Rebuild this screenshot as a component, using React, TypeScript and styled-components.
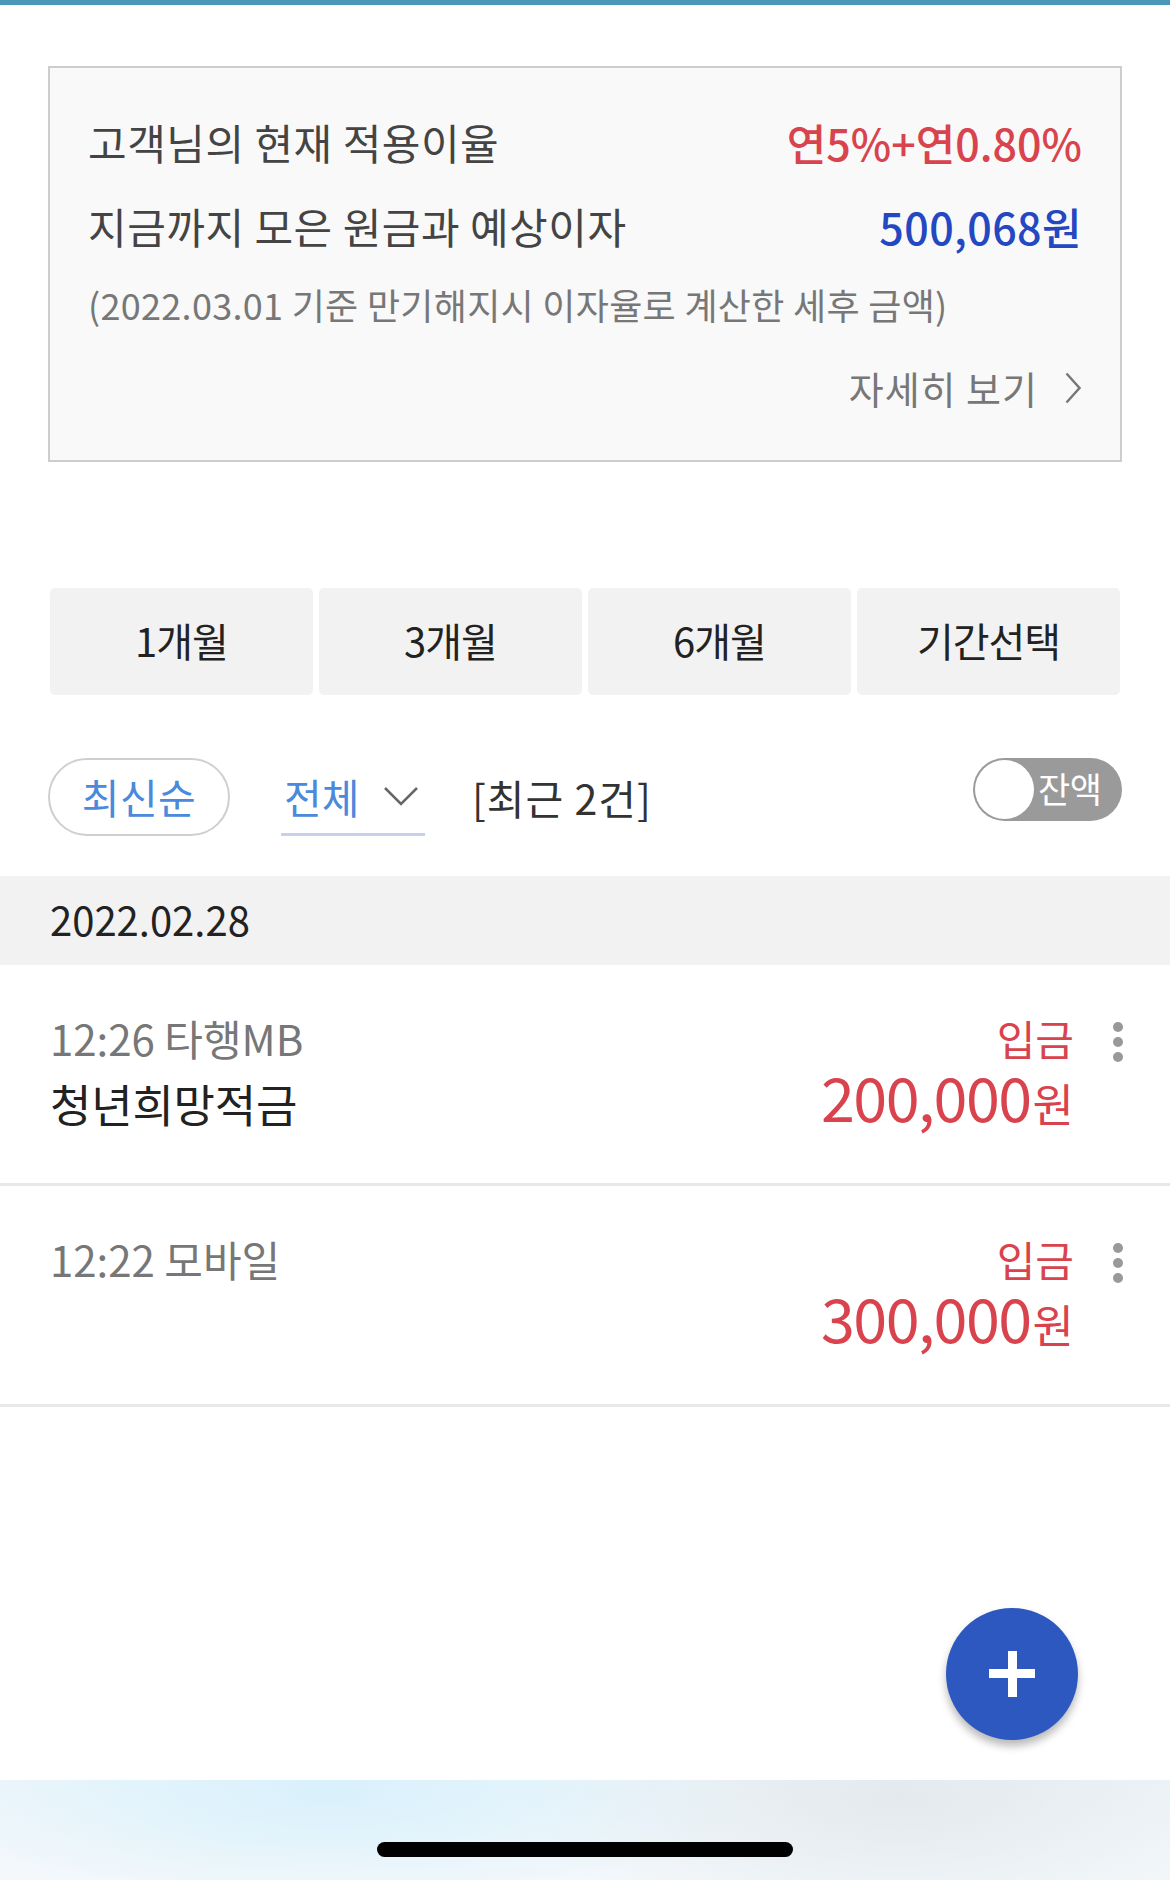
import React from "react";
import styled, { createGlobalStyle } from "styled-components";

const GlobalStyle = createGlobalStyle`
  html, body { margin: 0; padding: 0; background: #ffffff; }
  body { font-family: "Noto Sans CJK KR", "Noto Sans", sans-serif; color: #222; }
  * { box-sizing: border-box; }
`;

const Page = styled.div`
  position: relative;
  width: 1170px;
  min-height: 1880px;
  display: flex;
  flex-direction: column;
  background: #fff;
`;

const TopLine = styled.div`
  height: 5px;
  background: #4b97b8;
`;

const Card = styled.section`
  margin: 61px 48px 0;
  border: 2px solid #cdcdcd;
  background: #f9f9f9;
  padding: 46px 38px 47px;
  display: flex;
  flex-direction: column;
`;

const InfoRow = styled.div<{ $h: number; $mt?: number; $end?: boolean }>`
  height: ${(p) => p.$h}px;
  margin-top: ${(p) => p.$mt ?? 0}px;
  display: flex;
  align-items: center;
  justify-content: ${(p) => (p.$end ? "flex-end" : "space-between")};
  line-height: 1;
`;

const Label = styled.span`
  font-size: 42px;
  color: #444;
  letter-spacing: 0.5px;
`;

const Rate = styled.span`
  font-size: 43px;
  font-weight: 500;
  color: #d8434e;
  letter-spacing: 0px;
`;

const Total = styled.span`
  font-size: 43px;
  font-weight: 500;
  color: #2447c2;
  letter-spacing: 0.4px;
`;

const Note = styled.span`
  font-size: 36px;
  color: #777;
  letter-spacing: 0.3px;
`;

const DetailLink = styled.span`
  display: flex;
  align-items: center;
  gap: 26px;
  font-size: 38px;
  color: #777;
  letter-spacing: 1px;
`;

const Periods = styled.div`
  margin-top: 126px;
  padding: 0 50px;
  display: grid;
  grid-template-columns: repeat(4, 1fr);
  gap: 6px;
`;

const PeriodButton = styled.button`
  height: 107px;
  border: none;
  border-radius: 5px;
  background: #f2f2f2;
  font-family: inherit;
  font-size: 40px;
  color: #222;
  letter-spacing: -1px;
  display: flex;
  align-items: center;
  justify-content: center;
  padding: 0 0 4px;
`;

const FilterRow = styled.div`
  margin-top: 63px;
  padding: 0 48px;
  height: 78px;
  display: flex;
  align-items: center;
`;

const SortPill = styled.div`
  width: 182px;
  height: 78px;
  border: 2px solid #cfcfcf;
  border-radius: 39px;
  display: flex;
  align-items: center;
  justify-content: center;
  font-size: 41px;
  color: #4a89dc;
  letter-spacing: 0.5px;
  padding-bottom: 3px;
`;

const Dropdown = styled.div`
  margin-left: 51px;
  width: 144px;
  height: 78px;
  border-bottom: 3px solid #c5d0ea;
  display: flex;
  align-items: center;
  gap: 24px;
  padding-left: 3px;
  font-size: 41px;
  color: #4a89dc;
  letter-spacing: 0px;
`;

const RecentCount = styled.span`
  margin-left: 47px;
  font-size: 41px;
  color: #333;
  letter-spacing: 1px;
`;

const Toggle = styled.div`
  margin-left: auto;
  align-self: flex-start;
  width: 149px;
  height: 63px;
  border-radius: 32px;
  background: #9a9a9a;
  padding: 2px;
  display: flex;
  align-items: center;
`;

const Knob = styled.span`
  width: 59px;
  height: 59px;
  border-radius: 50%;
  background: #fff;
  flex: none;
`;

const ToggleText = styled.span`
  margin-left: 4px;
  font-size: 35px;
  color: #fff;
  letter-spacing: -0.5px;
  line-height: 1;
  padding-bottom: 4px;
`;

const DateHeader = styled.div`
  margin-top: 40px;
  height: 89px;
  background: #f2f2f2;
  padding-left: 50px;
  padding-bottom: 4px;
  display: flex;
  align-items: center;
  font-size: 40px;
  color: #222;
  letter-spacing: 0px;
`;

const Item = styled.div`
  display: flex;
  align-items: flex-start;
  padding: 48px 47px 50px 50px;
  border-bottom: 3px solid #e8e8e8;
  height: 221px;
`;

const Column = styled.div<{ $right?: boolean }>`
  display: flex;
  flex-direction: column;
  gap: ${(p) => (p.$right ? 0 : 8)}px;
  align-items: ${(p) => (p.$right ? "flex-end" : "flex-start")};
  ${(p) => (p.$right ? "margin-left: auto;" : "")}
`;

const Line = styled.div<{ $h: number }>`
  height: ${(p) => p.$h}px;
  display: flex;
  align-items: center;
  line-height: 1;
`;

const Meta = styled.span`
  font-size: 42px;
  color: #777;
  letter-spacing: 0px;
`;

const Title = styled.span`
  font-size: 45px;
  color: #222;
  letter-spacing: -0.2px;
`;

const Kind = styled.span`
  font-size: 42px;
  color: #d8434e;
  letter-spacing: 0px;
`;

const Amount = styled.span`
  font-size: 61px;
  color: #d8434e;
  letter-spacing: -1.5px;
  display: flex;
  align-items: baseline;
`;

const Won = styled.span`
  font-size: 45px;
  letter-spacing: 0;
  margin-left: 2px;
`;

const Kebab = styled.div`
  margin-left: 39px;
  margin-top: 9px;
  display: flex;
  flex-direction: column;
  gap: 5px;
`;

const Dot = styled.span`
  width: 10px;
  height: 10px;
  border-radius: 50%;
  background: #999;
`;

const Spacer = styled.div`
  flex: 1;
`;

const HomeBar = styled.div`
  height: 100px;
  background:
    radial-gradient(ellipse 420px 120px at 330px 10px, rgba(214, 240, 252, 0.9), rgba(214, 240, 252, 0) 100%),
    radial-gradient(ellipse 380px 140px at 900px 20px, rgba(226, 232, 236, 0.9), rgba(226, 232, 236, 0) 100%),
    linear-gradient(180deg, #eef6fa 0%, #f4f8fb 100%);
  display: flex;
  justify-content: center;
  padding-top: 62px;
`;

const Indicator = styled.div`
  width: 416px;
  height: 15px;
  border-radius: 8px;
  background: #000;
`;

const Fab = styled.button`
  position: absolute;
  right: 92px;
  bottom: 140px;
  width: 132px;
  height: 132px;
  border-radius: 50%;
  border: none;
  background: #2d58c0;
  box-shadow: 0 6px 8px rgba(0, 0, 0, 0.28);
  display: flex;
  align-items: center;
  justify-content: center;
  padding: 0;
`;

const Chevron = ({ w, h, color, sw }: { w: number; h: number; color: string; sw: number }) => (
  <svg width={w} height={h} viewBox={`0 0 ${w} ${h}`} fill="none">
    <polyline points={`${sw},${sw} ${w - sw},${h / 2} ${sw},${h - sw}`} stroke={color} strokeWidth={sw} />
  </svg>
);

const DownChevron = () => (
  <svg width="36" height="20" viewBox="0 0 36 20" fill="none">
    <polyline points="2,2 18,18 34,2" stroke="#666" strokeWidth="2.5" />
  </svg>
);

const PlusIcon = () => (
  <svg width="46" height="46" viewBox="0 0 46 46">
    <rect x="19" y="0" width="9" height="46" fill="#fff" />
    <rect x="0" y="18" width="46" height="9" fill="#fff" />
  </svg>
);

const transactions = [
  { meta: "12:26 타행MB", title: "청년희망적금", amount: "200,000" },
  { meta: "12:22 모바일", title: "", amount: "300,000" },
];

export default function App() {
  return (
    <>
      <GlobalStyle />
      <Page>
        <TopLine />
        <Card>
          <InfoRow $h={56}>
            <Label>고객님의 현재 적용이율</Label>
            <Rate>연5%+연0.80%</Rate>
          </InfoRow>
          <InfoRow $h={56} $mt={28}>
            <Label>지금까지 모은 원금과 예상이자</Label>
            <Total>500,068원</Total>
          </InfoRow>
          <InfoRow $h={44} $mt={28}>
            <Note>(2022.03.01 기준 만기해지시 이자율로 계산한 세후 금액)</Note>
          </InfoRow>
          <InfoRow $h={50} $mt={37} $end>
            <DetailLink>
              자세히 보기
              <Chevron w={18} h={34} color="#777" sw={2.5} />
            </DetailLink>
          </InfoRow>
        </Card>

        <Periods>
          <PeriodButton>1개월</PeriodButton>
          <PeriodButton>3개월</PeriodButton>
          <PeriodButton>6개월</PeriodButton>
          <PeriodButton>기간선택</PeriodButton>
        </Periods>

        <FilterRow>
          <SortPill>최신순</SortPill>
          <Dropdown>
            전체
            <DownChevron />
          </Dropdown>
          <RecentCount>[최근 2건]</RecentCount>
          <Toggle>
            <Knob />
            <ToggleText>잔액</ToggleText>
          </Toggle>
        </FilterRow>

        <DateHeader>2022.02.28</DateHeader>

        {transactions.map((t) => (
          <Item key={t.meta}>
            <Column>
              <Line $h={50}>
                <Meta>{t.meta}</Meta>
              </Line>
              {t.title && (
                <Line $h={64}>
                  <Title>{t.title}</Title>
                </Line>
              )}
            </Column>
            <Column $right>
              <Line $h={50}>
                <Kind>입금</Kind>
              </Line>
              <Line $h={64}>
                <Amount>
                  {t.amount}
                  <Won>원</Won>
                </Amount>
              </Line>
            </Column>
            <Kebab>
              <Dot />
              <Dot />
              <Dot />
            </Kebab>
          </Item>
        ))}

        <Spacer />
        <HomeBar>
          <Indicator />
        </HomeBar>
        <Fab aria-label="추가">
          <PlusIcon />
        </Fab>
      </Page>
    </>
  );
}
